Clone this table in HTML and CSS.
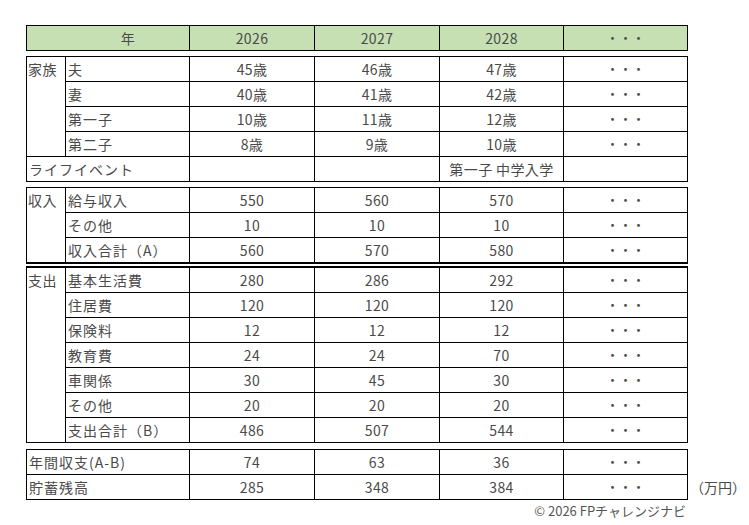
FILE: index.html
```html
<!DOCTYPE html>
<html lang="ja">
<head>
<meta charset="utf-8">
<link rel="stylesheet" href="styles.css">
</head>
<body>
<div class="page">
  <div class="block header">
    <div class="c head-label span2">年</div>
    <div class="c num">2026</div>
    <div class="c num">2027</div>
    <div class="c num">2028</div>
    <div class="c num dots">・・・</div>
  </div>

  <div class="block family">
    <div class="c group rows4">家族</div>
    <div class="c lbl">夫</div><div class="c num">45歳</div><div class="c num">46歳</div><div class="c num">47歳</div><div class="c num dots">・・・</div>
    <div class="c lbl">妻</div><div class="c num">40歳</div><div class="c num">41歳</div><div class="c num">42歳</div><div class="c num dots">・・・</div>
    <div class="c lbl">第一子</div><div class="c num">10歳</div><div class="c num">11歳</div><div class="c num">12歳</div><div class="c num dots">・・・</div>
    <div class="c lbl">第二子</div><div class="c num">8歳</div><div class="c num">9歳</div><div class="c num">10歳</div><div class="c num dots">・・・</div>
    <div class="c lbl span2">ライフイベント</div><div class="c num"></div><div class="c num"></div><div class="c num">第一子 中学入学</div><div class="c num"></div>
  </div>

  <div class="block income">
    <div class="c group rows3">収入</div>
    <div class="c lbl">給与収入</div><div class="c num">550</div><div class="c num">560</div><div class="c num">570</div><div class="c num dots">・・・</div>
    <div class="c lbl">その他</div><div class="c num">10</div><div class="c num">10</div><div class="c num">10</div><div class="c num dots">・・・</div>
    <div class="c lbl last">収入合計（A）</div><div class="c num last">560</div><div class="c num last">570</div><div class="c num last">580</div><div class="c num dots last">・・・</div>
  </div>

  <div class="block expense">
    <div class="c group rows7">支出</div>
    <div class="c lbl">基本生活費</div><div class="c num">280</div><div class="c num">286</div><div class="c num">292</div><div class="c num dots">・・・</div>
    <div class="c lbl">住居費</div><div class="c num">120</div><div class="c num">120</div><div class="c num">120</div><div class="c num dots">・・・</div>
    <div class="c lbl">保険料</div><div class="c num">12</div><div class="c num">12</div><div class="c num">12</div><div class="c num dots">・・・</div>
    <div class="c lbl">教育費</div><div class="c num">24</div><div class="c num">24</div><div class="c num">70</div><div class="c num dots">・・・</div>
    <div class="c lbl">車関係</div><div class="c num">30</div><div class="c num">45</div><div class="c num">30</div><div class="c num dots">・・・</div>
    <div class="c lbl">その他</div><div class="c num">20</div><div class="c num">20</div><div class="c num">20</div><div class="c num dots">・・・</div>
    <div class="c lbl">支出合計（B）</div><div class="c num">486</div><div class="c num">507</div><div class="c num">544</div><div class="c num dots">・・・</div>
  </div>

  <div class="summary-row">
    <div class="block summary">
      <div class="c lbl span2">年間収支(A-B)</div><div class="c num">74</div><div class="c num">63</div><div class="c num">36</div><div class="c num dots">・・・</div>
      <div class="c lbl span2">貯蓄残高</div><div class="c num">285</div><div class="c num">348</div><div class="c num">384</div><div class="c num dots">・・・</div>
    </div>
    <div class="unit">（万円）</div>
  </div>

  <div class="copy">© 2026 FPチャレンジナビ</div>
</div>
</body>
</html>
```

FILE: styles.css
```css
html, body {
  margin: 0;
  padding: 0;
  background: #ffffff;
}

body {
  font-family: "Noto Sans CJK JP", "Noto Sans", sans-serif;
  font-size: 14px;
  color: #4a4a4a;
}

.page {
  padding: 25px 0 0 26px;
  width: 662px;
}

.block {
  display: grid;
  grid-template-columns: 39px 124px 125px 125px 124px 124px;
  grid-auto-rows: 25px;
  border-top: 1px solid #000;
  border-left: 1px solid #000;
  width: 662px;
  box-sizing: border-box;
}

.c {
  box-sizing: border-box;
  border-right: 1px solid #000;
  border-bottom: 1px solid #000;
  line-height: 24px;
  white-space: nowrap;
  overflow: hidden;
  letter-spacing: 0.4px;
}

.num {
  text-align: center;
}

.lbl {
  padding-left: 2px;
  letter-spacing: 1px;
}

.group {
  padding-left: 1px;
  letter-spacing: 0.6px;
}

.span2 {
  grid-column: span 2;
}

.rows3 { grid-row: span 3; }
.rows4 { grid-row: span 4; }
.rows7 { grid-row: span 7; }

.dots {
  letter-spacing: 0;
  font-size: 13px;
}

.header .c {
  background: #c6e0b4;
}

.head-label {
  text-align: center;
  padding-left: 40px;
}

.header { margin-bottom: 5px; }
.family { margin-bottom: 5px; }

.income .last {
  border-bottom-width: 2px;
}
.income .group {
  border-bottom-width: 2px;
}
.income {
  grid-template-rows: 25px 25px 26px;
  margin-bottom: 2px;
}

.expense {
  border-top-width: 2px;
  margin-bottom: 6px;
}

.summary-row {
  display: flex;
  align-items: flex-end;
  width: 723px;
}

.unit {
  margin-left: 2px;
  line-height: 25px;
  white-space: nowrap;
  font-size: 14px;
}

.copy {
  text-align: right;
  font-size: 13px;
  color: #555555;
  margin-top: 1px;
  padding-right: 2px;
}
```
